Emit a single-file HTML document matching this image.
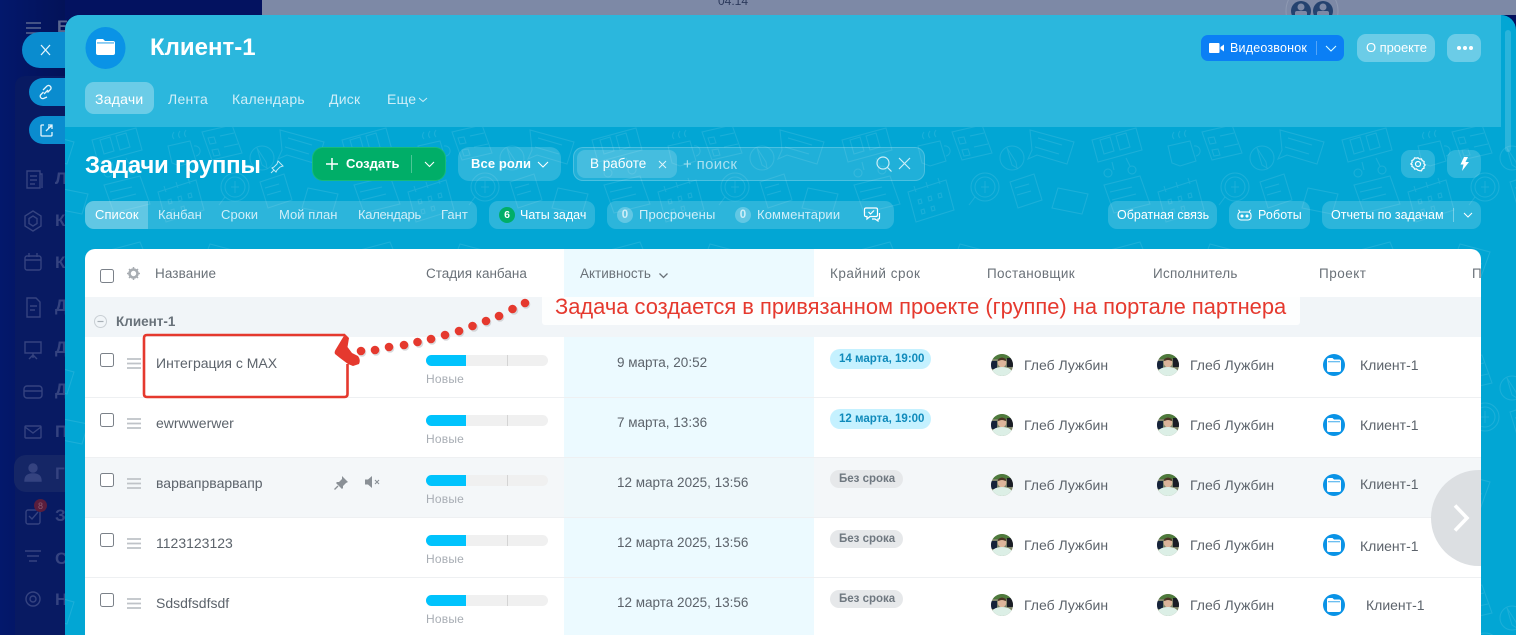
<!DOCTYPE html>
<html lang="ru"><head><meta charset="utf-8"><title>Клиент-1</title>
<style>
html,body{margin:0;padding:0;width:1516px;height:635px;overflow:hidden;background:#03125f;font-family:"Liberation Sans",sans-serif}
div,span{position:absolute;box-sizing:border-box}
.t{white-space:nowrap;line-height:20px;height:20px;font-size:13.5px;letter-spacing:0}
.n{font-size:14px;color:#5c636b}
.d{font-size:13.5px;color:#5c636b}
.s{font-size:12px;color:#a8adb4;letter-spacing:.2px}
.m{font-size:13px;letter-spacing:.05px}
.w{color:#fff}.l{color:#cfeef8}
.h{color:#6a7178;top:264px}
.b{border-radius:9px;background:rgba(255,255,255,.17)}
.c{left:100px;width:14px;height:14px;border:1.3px solid #7b8189;border-radius:2.5px;background:#fff}
.side{left:55px;color:#354380;font-weight:bold;font-size:17px}
svg{position:absolute;overflow:visible}
</style></head><body>
<svg width="0" height="0" style="left:0;top:0"><defs>
<symbol id="folder" viewBox="0 0 22 22"><circle cx="11" cy="11" r="11" fill="#0a93e6"/><path d="M4 6q0-2 2-2h3.500L11 5.500h5q2 0 2 2V16q0 2-2 2H6q-2 0-2-2z" fill="#fff"/><path d="M5 7.800h12" stroke="#0a93e6" stroke-width=".8"/></symbol>
<symbol id="ava" viewBox="0 0 22 22"><clipPath id="cc"><circle cx="11" cy="11" r="11"/></clipPath><g clip-path="url(#cc)"><rect width="22" height="22" fill="#7d8468"/><rect y="0" width="22" height="5" fill="#4e7a3c"/><rect y="7" width="6" height="8" fill="#16233a"/><rect x="16" y="4" width="6" height="9" fill="#1b1e26"/><ellipse cx="11" cy="8.500" rx="4.300" ry="5" fill="#dcb59b"/><path d="M6.500 6q4.500-5 9 0l-1 1q-3.500-2-7 0z" fill="#4a3424"/><path d="M0 22q0-9 11-9t11 9z" fill="#dcefe6"/></g></symbol>
<symbol id="drag" viewBox="0 0 14 11"><path d="M0 1h14M0 5.500h14M0 10h14" stroke="#bfc3c8" stroke-width="1.700"/></symbol>
<symbol id="bar" viewBox="0 0 122 11"><rect width="122" height="11" rx="5.500" fill="#f0f0f0"/><path d="M5.500 0H40v11H5.500a5.500 5.500 0 0 1 0-11z" fill="#00c3fd"/><rect x="81" width="1" height="11" fill="#d4d4d4"/></symbol>
<pattern id="pt" x="90" y="120" width="250" height="230" patternUnits="userSpaceOnUse"><g fill="none" stroke="#fff" stroke-opacity=".1" stroke-width="1">
<path d="M2 20l44-12 6 22-44 12zM10 20l10-3 4 14-10 3zM26 16l10-3 4 14-10 3zM22 42l2 8M36 38l4 8"/><circle cx="18" cy="53" r="4"/><circle cx="42" cy="50" r="4"/>
<path d="M78 26l22-5 6 20-16 5-8-3zM104 26a5 5 0 1 1 2 10M84 12q-3 4 0 7M90 11q-3 4 0 7M96 10q-3 4 0 7"/>
<path d="M112 12l30-7 10 28-30 7zM118 18l6-1 2 6-6 1zM130 16l14-3M122 30l6-1 2 6-6 1zM134 27l14-3"/>
<path d="M14 65l36-9 10 28-36 9zM20 72l22-5M22 80l24-6"/>
<path d="M68 72l38-12 8 30-38 12zM74 66l2 6M86 62l2 6M98 58l2 6M78 80l3-1 1 4-3 1zM88 77l3-1 1 4-3 1zM98 74l3-1 1 4-3 1zM81 90l3-1 1 4-3 1zM91 87l3-1 1 4-3 1z"/>
<circle cx="145" cy="67" r="14"/><circle cx="145" cy="67" r="10"/><path d="M141 67h8M145 61v12M135 77l-6 8"/>
<circle cx="172" cy="38" r="12"/><path d="M167 28l9 14 1 6-5-3z"/>
<path d="M190 10l44 12-7 22-30-9-9 4 4-9zM198 18l24 7M195 27l24 7"/>
<path d="M170 62l24-8 8 26-24 8zM175 68l14-4M177 75l14-4"/><path d="M218 68l30 6-6 20-30-6z"/>
<path d="M20 130l30-8 14 34-22 20-30-6zM30 140l14-4"/><path d="M120 124l30 8-16 44-30-10zM130 140l12 4M126 152l12 4"/>
<circle cx="200" cy="160" r="14"/><path d="M195 158l5-6 5 6h-3v6h-4v-6z"/><path d="M60 200l42-12 8 24-42 14zM70 200l10-3 4 12-10 3z"/>
</g></pattern>
</defs></svg>

<!-- back page -->
<div style="left:262px;top:0;width:1254px;height:15px;background:#7d89a6"></div>
<div class="t" style="left:718px;top:-9px;font-size:12px;color:#2c3a5c">04:14</div>
<svg style="left:0;top:0" width="1516" height="24"><circle cx="1312" cy="11" r="26" fill="none" stroke="#8e99b2"/><circle cx="1301" cy="11" r="10" fill="#24426f"/><circle cx="1323" cy="11" r="10" fill="#24426f"/><g fill="#7d89a6"><circle cx="1301" cy="7" r="3.500"/><circle cx="1323" cy="7" r="3.500"/><rect x="1295" y="11" width="12" height="6" rx="2"/><rect x="1317" y="11" width="12" height="6" rx="2"/></g></svg>
<!-- sidebar -->
<div style="left:0;top:0;width:262px;height:15px;background:#031260"></div>
<div style="left:0;top:0;width:65px;height:635px;background:linear-gradient(90deg,#03186c,#031258)"></div>
<div style="left:15px;top:76px;width:50px;height:559px;border-radius:10px 0 0 0;background:#081a62"></div>
<div style="left:14px;top:455px;width:51px;height:37px;border-radius:12px 0 0 12px;background:#152666"></div>
<svg style="left:0;top:0" width="65" height="635" fill="none" stroke="#354380" stroke-width="1.400">
<path d="M26 23h15M26 28h15M26 33h15" stroke="#5a668f"/>
<path d="M27 171h13v17H27zM30 176h7M30 180h7M30 184h5M40 174h2v14"/>
<path d="M33 211l8 5v10l-8 5-8-5v-10zM33 216l4 2.500v5l-4 2.500-4-2.500v-5z"/>
<rect x="25" y="256" width="16" height="14" rx="2"/><path d="M25 260h16M29 253v4M37 253v4"/>
<path d="M27 298h9l4 4v15H27zM30 306h7M30 310h5"/>
<path d="M25 342h16v11H25zM33 353v5M29 359l4-4 4 4"/>
<rect x="24" y="386" width="18" height="12" rx="3"/><path d="M24 391h18"/>
<rect x="25" y="426" width="16" height="12" rx="1"/><path d="M25 427l8 6 8-6"/>
<circle cx="33" cy="468" r="4" fill="#354380"/><path d="M25 481q0-7 8-7t8 7z" fill="#354380"/>
<rect x="26" y="510" width="14" height="14" rx="2"/><path d="M29 516l3 3 6-7"/>
<path d="M25 551h16M27 556h12M29 561h8"/>
<circle cx="33" cy="599" r="7"/><circle cx="33" cy="599" r="3"/>
</svg>
<div style="left:34px;top:499px;width:13px;height:13px;border-radius:50%;background:#5a1d3c"></div>
<div class="t" style="left:34px;top:496px;width:13px;text-align:center;font-size:9px;color:#8a5a70">8</div>
<div class="t side" style="left:57px;top:17px;color:#5a668f">Б</div>
<div class="t side" style="top:169px">Л</div><div class="t side" style="top:211px">К</div><div class="t side" style="top:253px">К</div><div class="t side" style="top:296px">Д</div><div class="t side" style="top:338px">Д</div><div class="t side" style="top:380px">Д</div><div class="t side" style="top:422px">П</div><div class="t side" style="top:464px">Г</div><div class="t side" style="top:506px">З</div><div class="t side" style="top:549px">С</div><div class="t side" style="top:590px">Н</div>
<!-- side tabs -->
<div style="left:22px;top:32px;width:60px;height:36px;border-radius:18px 0 0 18px;background:#0a8ccf"></div>
<div style="left:29px;top:78px;width:50px;height:28px;border-radius:14px 0 0 14px;background:#0a8ccf"></div>
<div style="left:29px;top:116px;width:50px;height:28px;border-radius:14px 0 0 14px;background:#0a8ccf"></div>
<svg style="left:0;top:0" width="65" height="150" fill="none" stroke="#e4f5fc" stroke-width="1.300">
<path d="M41 45l9 10M50 45l-9 10"/>
<path d="M43 90l4-4a2.500 2.500 0 0 1 3.500 3.500l-3 3M47 97l-3.500 1.500a2.500 2.500 0 0 1-3-3.500l3-3M44 94l4-4"/>
<path d="M50 128v-1h-2M44 125h-2q-1 0-1 1v9q0 1 1 1h9q1 0 1-1v-3M46 131l6-6M48 125h4v4"/>
</svg>

<!-- slider panel -->
<div style="left:65px;top:15px;width:1451px;height:620px;background:#02a6d4;border-radius:15px 15px 0 0;overflow:hidden">
 <svg style="left:0;top:0" width="1451" height="620"><g transform="translate(-65 -15)"><rect x="65" y="15" width="1451" height="620" fill="url(#pt)"/></g></svg>
 <div style="left:0;top:0;width:1436px;height:112px;background:#2bb7dd"></div>
 <div style="left:1440px;top:15px;width:6px;height:122px;background:rgba(255,255,255,.16);border-radius:3px"></div>
</div>

<!-- header -->
<svg style="left:85px;top:27px" width="41" height="42" viewBox="0 0 41 42"><ellipse cx="20.500" cy="21" rx="20" ry="21" fill="#0a93e6"/><path d="M11 14q0-2 2-2h5l2 2h8q2 0 2 2v10q0 2-2 2H13q-2 0-2-2z" fill="#fff"/><rect x="12" y="15.500" width="17" height=".9" fill="#0a93e6"/></svg>
<div class="t w" style="left:150px;top:34px;height:28px;line-height:28px;font-size:24px;font-weight:bold">Клиент-1</div>
<div class="b" style="left:85px;top:82px;width:69px;height:32px;background:rgba(255,255,255,.3)"></div>
<div class="t w" style="left:95px;top:89px;font-size:14px;letter-spacing:.25px">Задачи</div>
<div class="t l" style="left:168px;top:89px;font-size:14px;letter-spacing:.25px">Лента</div>
<div class="t l" style="left:232px;top:89px;font-size:14px;letter-spacing:.25px">Календарь</div>
<div class="t l" style="left:329px;top:89px;font-size:14px;letter-spacing:.25px">Диск</div>
<div class="t l" style="left:387px;top:89px;font-size:14px;letter-spacing:.25px">Еще</div>
<svg style="left:418px;top:97px" width="10" height="6" fill="none" stroke="#cfeef8"><path d="M1 1l4 3.500L9 1"/></svg>

<div style="left:1201px;top:35px;width:143px;height:26px;border-radius:7px;background:#0b7ff5"></div>
<svg style="left:1209px;top:43px" width="16" height="11" fill="#fff"><rect width="10.500" height="10" rx="1"/><path d="M11.500 4l3.500-2.500v7L11.500 6z"/></svg>
<div class="t w" style="left:1230px;top:38px;font-size:12.500px;letter-spacing:.2px">Видеозвонок</div>
<div style="left:1316px;top:41px;width:1px;height:14px;background:rgba(255,255,255,.3)"></div>
<svg style="left:1325px;top:45px" width="12" height="8" fill="none" stroke="#dff" stroke-width="1.100"><path d="M1 1l5 5 5-5"/></svg>
<div class="b" style="left:1357px;top:34px;width:78px;height:28px;background:rgba(255,255,255,.3)"></div>
<div class="t w" style="left:1366px;top:38px;font-size:13px;letter-spacing:-.05px">О проекте</div>
<div class="b" style="left:1447px;top:34px;width:34px;height:28px;background:rgba(255,255,255,.3)"></div>
<svg style="left:1456px;top:45px" width="16" height="6" fill="#fff"><circle cx="3" cy="3" r="2"/><circle cx="9" cy="3" r="2"/><circle cx="15" cy="3" r="2"/></svg>

<!-- toolbar 1 -->
<div class="t w" style="left:85px;top:151px;height:30px;line-height:30px;font-size:24px;font-weight:bold;letter-spacing:-.25px">Задачи группы</div>
<svg style="left:270px;top:160px" width="14" height="14" fill="none" stroke="#bfe8f5"><path d="M8 1l5 5-3 1-3 3-1 2-4-4 2-1 3-3zM4 10l-3 3"/></svg>
<div style="left:312px;top:147px;width:134px;height:34px;border-radius:11px;background:#00ae68;border:1px solid #17bb7b"></div>
<svg style="left:326px;top:158px" width="12" height="12" stroke="#fff" stroke-width="1.500"><path d="M6 0v12M0 6h12"/></svg>
<div class="t w" style="left:346px;top:154px;font-weight:bold;font-size:13px">Создать</div>
<div style="left:411px;top:155px;width:1px;height:18px;background:rgba(255,255,255,.3)"></div>
<svg style="left:424px;top:161px" width="11" height="7" fill="none" stroke="#fff" stroke-width="1.100"><path d="M1 1l4.500 4.500L10 1"/></svg>
<div class="b" style="left:458px;top:147px;width:103px;height:34px;border-radius:11px"></div>
<div class="t w" style="left:471px;top:154px;font-weight:bold;font-size:13px;letter-spacing:.1px">Все роли</div>
<svg style="left:537px;top:161px" width="12" height="7" fill="none" stroke="#fff" stroke-width="1.100"><path d="M1 1l5 5 5-5"/></svg>
<div style="left:573px;top:147px;width:352px;height:34px;border-radius:10px;background:rgba(255,255,255,.12);border:1px solid rgba(255,255,255,.2)"></div>
<div style="left:577px;top:150px;width:100px;height:28px;border-radius:8px;background:rgba(255,255,255,.17)"></div>
<div class="t w" style="left:590px;top:154px;font-size:13.5px">В работе</div>
<svg style="left:658px;top:160px" width="9" height="9" stroke="#e0f5fb"><path d="M1 1l7 7M8 1L1 8"/></svg>
<div class="t" style="left:683px;top:155px;color:#a7e0f0;font-size:15px;letter-spacing:.35px">+ поиск</div>
<svg style="left:876px;top:156px" width="38" height="16" fill="none" stroke="#cdeef7" stroke-width="1.200"><circle cx="7" cy="7" r="6"/><path d="M11.500 11.500L15.500 15.500M23 2l11 11M34 2L23 13"/></svg>
<div class="b" style="left:1401px;top:150px;width:34px;height:28px"></div>
<svg style="left:1411px;top:157px" width="14" height="14" fill="none" stroke="#fff" stroke-width="1.200"><circle cx="7" cy="7" r="2.500"/><path d="M7 .8l1.500 1.300 2-.2.800 1.800 1.800.8-.2 2 1.300 1.500-1.300 1.500.2 1.700-1.800.8-.8 1.800-2-.2L7 13.200l-1.500-1.300-2 .2-.8-1.800-1.800-.8.2-1.700L-.2 7l1.300-1.500-.2-2 1.800-.8.800-1.800 2 .2z"/></svg>
<div class="b" style="left:1447px;top:150px;width:34px;height:28px"></div>
<svg style="left:1459px;top:157px" width="10" height="14" fill="#fff"><path d="M5 0h4L6.500 5H10L3 14l1.500-6.500H1.500z"/></svg>

<!-- toolbar 2 -->
<div class="b" style="left:85px;top:201px;width:392px;height:28px"></div>
<div style="left:85px;top:201px;width:63px;height:28px;border-radius:9px 0 0 9px;background:rgba(255,255,255,.25)"></div>
<div class="t w m" style="left:95px;top:205px">Список</div>
<div class="t l m" style="left:158px;top:205px">Канбан</div>
<div class="t l m" style="left:221px;top:205px">Сроки</div>
<div class="t l m" style="left:279px;top:205px">Мой план</div>
<div class="t l m" style="left:358px;top:205px;letter-spacing:-.3px">Календарь</div>
<div class="t l m" style="left:441px;top:205px">Гант</div>
<div class="b" style="left:489px;top:201px;width:106px;height:28px"></div>
<div style="left:499px;top:207px;width:16px;height:16px;border-radius:50%;background:#00ae68"></div>
<div class="t w" style="left:499px;top:205px;width:16px;text-align:center;font-size:10.5px;font-weight:bold">6</div>
<div class="t w" style="left:520px;top:205px;font-size:12.500px">Чаты задач</div>
<div class="b" style="left:607px;top:201px;width:287px;height:28px"></div>
<div style="left:617px;top:207px;width:16px;height:16px;border-radius:50%;background:rgba(255,255,255,.25)"></div>
<div class="t" style="left:617px;top:205px;width:16px;text-align:center;font-size:11.5px;font-weight:bold;color:#cfeef8">0</div>
<div class="t l" style="left:639px;top:205px;font-size:13px;letter-spacing:.15px">Просрочены</div>
<div style="left:735px;top:207px;width:16px;height:16px;border-radius:50%;background:rgba(255,255,255,.25)"></div>
<div class="t" style="left:735px;top:205px;width:16px;text-align:center;font-size:11.5px;font-weight:bold;color:#cfeef8">0</div>
<div class="t l" style="left:757px;top:205px;font-size:13px;letter-spacing:.12px">Комментарии</div>
<svg style="left:864px;top:207px" width="17" height="16" fill="none" stroke="#fff" stroke-width="1.200"><path d="M2 1h10q1.500 0 1.500 1.500V8q0 1.500-1.500 1.500H6L3 12V9.500H2Q.5 9.500.5 8V2.500Q.5 1 2 1zM4.500 5l2 2 3.500-3.500M15.500 6v5q0 1-1 1H14v2l-3-2H8"/></svg>
<div class="b" style="left:1108px;top:201px;width:109px;height:28px"></div>
<div class="t w" style="left:1117px;top:205px;font-size:12.500px">Обратная связь</div>
<div class="b" style="left:1229px;top:201px;width:81px;height:28px"></div>
<svg style="left:1237px;top:209px" width="15" height="13" fill="none" stroke="#fff" stroke-width="1.100"><rect x="1" y="3" width="13" height="8" rx="3"/><path d="M3 3L1.500 .8M12 3l1.500-2.200"/><circle cx="5" cy="7" r="1" fill="#fff"/><circle cx="10" cy="7" r="1" fill="#fff"/></svg>
<div class="t w" style="left:1258px;top:205px;font-size:12.500px;letter-spacing:.1px">Роботы</div>
<div class="b" style="left:1322px;top:201px;width:159px;height:28px"></div>
<div class="t w" style="left:1331px;top:205px;font-size:12.500px">Отчеты по задачам</div>
<div style="left:1453px;top:208px;width:1px;height:14px;background:rgba(255,255,255,.35)"></div>
<svg style="left:1463px;top:212px" width="10" height="7" fill="none" stroke="#fff"><path d="M1 1l4 4 4-4"/></svg>

<!-- table -->
<div style="left:85px;top:249px;width:1396px;height:386px;background:#fff;border-radius:10px 10px 0 0;overflow:hidden">
 <div style="left:0;top:209px;width:1396px;height:59px;background:#f4f7f9"></div>
 <div style="left:479px;top:0;width:250px;height:386px;background:#ecfaff"></div>
 <div style="left:479px;top:209px;width:250px;height:59px;background:#eef8fb"></div>
 <div style="left:0;top:48px;width:1396px;height:40px;background:#f1f5f8"></div>
 <div style="left:0;top:148px;width:1396px;height:1px;background:#eef0f2"></div>
 <div style="left:0;top:208px;width:1396px;height:1px;background:#eef0f2"></div>
 <div style="left:0;top:268px;width:1396px;height:1px;background:#eef0f2"></div>
 <div style="left:0;top:328px;width:1396px;height:1px;background:#eef0f2"></div>
 <div class="t" style="left:1387px;top:15px;color:#6a7178">П</div>
</div>
<div class="c" style="top:269px"></div>
<svg style="left:127px;top:267px" width="13" height="13"><circle cx="6.500" cy="6.500" r="4" fill="none" stroke="#a8adb2" stroke-width="2.600"/><path d="M6.500 0v13M0 6.500h13M2 2l9 9M11 2l-9 9" stroke="#a8adb2" stroke-width="1.500" stroke-dasharray="2 9 2 0"/></svg>
<div class="t h" style="left:155px;letter-spacing:.1px">Название</div>
<div class="t h" style="left:426px">Стадия канбана</div>
<div class="t h" style="left:580px">Активность</div>
<svg style="left:659px;top:273px" width="9" height="6" fill="none" stroke="#6a7178" stroke-width="1.300"><path d="M.5.5l4 4 4-4"/></svg>
<div class="t h" style="left:830px;letter-spacing:.5px">Крайний срок</div>
<div class="t h" style="left:987px;letter-spacing:.35px">Постановщик</div>
<div class="t h" style="left:1153px;letter-spacing:.25px">Исполнитель</div>
<div class="t h" style="left:1319px;letter-spacing:.5px">Проект</div>
<svg style="left:94px;top:315px" width="13" height="13"><circle cx="6.500" cy="6.500" r="6" fill="#f1f5f8" stroke="#c9cfd4"/><path d="M3.500 6.500h6" stroke="#a8b0b6" stroke-width="1.200"/></svg>
<div class="t" style="left:116px;top:312px;font-weight:bold;color:#687179;font-size:13.5px">Клиент-1</div>

<!-- row 1 -->
<div class="c" style="top:353px"></div><svg style="left:127px;top:358px" width="14" height="11"><use href="#drag"/></svg>
<div class="t n" style="left:156px;top:353px">Интеграция с MAX</div>
<svg style="left:426px;top:355px" width="122" height="11"><use href="#bar"/></svg><div class="t s" style="left:426px;top:369px">Новые</div>
<div class="t d" style="left:617px;top:353px">9 марта, 20:52</div>
<div style="left:830px;top:349px;width:101px;height:20px;border-radius:10px;background:#c5f1ff"></div><div class="t" style="left:839px;top:349px;font-size:11.500px;font-weight:bold;color:#0f8abb">14 марта, 19:00</div>
<svg style="left:991px;top:354px" width="22" height="22"><use href="#ava"/></svg><div class="t n" style="left:1024px;top:355px">Глеб Лужбин</div>
<svg style="left:1157px;top:354px" width="22" height="22"><use href="#ava"/></svg><div class="t n" style="left:1190px;top:355px">Глеб Лужбин</div>
<svg style="left:1323px;top:354px" width="22" height="22"><use href="#folder"/></svg><div class="t n" style="left:1360px;top:355px">Клиент-1</div>
<!-- row 2 -->
<div class="c" style="top:413px"></div><svg style="left:127px;top:418px" width="14" height="11"><use href="#drag"/></svg>
<div class="t n" style="left:156px;top:413px">ewrwwerwer</div>
<svg style="left:426px;top:415px" width="122" height="11"><use href="#bar"/></svg><div class="t s" style="left:426px;top:429px">Новые</div>
<div class="t d" style="left:617px;top:413px">7 марта, 13:36</div>
<div style="left:830px;top:409px;width:101px;height:20px;border-radius:10px;background:#c5f1ff"></div><div class="t" style="left:839px;top:409px;font-size:11.500px;font-weight:bold;color:#0f8abb">12 марта, 19:00</div>
<svg style="left:991px;top:414px" width="22" height="22"><use href="#ava"/></svg><div class="t n" style="left:1024px;top:415px">Глеб Лужбин</div>
<svg style="left:1157px;top:414px" width="22" height="22"><use href="#ava"/></svg><div class="t n" style="left:1190px;top:415px">Глеб Лужбин</div>
<svg style="left:1323px;top:414px" width="22" height="22"><use href="#folder"/></svg><div class="t n" style="left:1360px;top:415px">Клиент-1</div>
<!-- row 3 -->
<div class="c" style="top:473px"></div><svg style="left:127px;top:478px" width="14" height="11"><use href="#drag"/></svg>
<div class="t n" style="left:156px;top:473px">варвапрварвапр</div>
<svg style="left:334px;top:476px" width="14" height="14" fill="#8a9096"><path d="M8 0l6 6-2 1-3 3 0 2-1 1-6-6 1-1 2 0 3-3z"/><path d="M4 10l-3.500 3.500" stroke="#8a9096" stroke-width="1.300"/></svg>
<svg style="left:365px;top:476px" width="16" height="12"><path d="M0 3.500h3L7 0v12L3 8.500H0z" fill="#8a9096"/><path d="M10 4l4 4M14 4l-4 4" stroke="#8a9096" stroke-width="1.100"/></svg>
<svg style="left:426px;top:475px" width="122" height="11"><use href="#bar"/></svg><div class="t s" style="left:426px;top:489px">Новые</div>
<div class="t d" style="left:617px;top:473px">12 марта 2025, 13:56</div>
<div style="left:830px;top:470px;width:73px;height:18px;border-radius:9px;background:#e6e8ea"></div><div class="t" style="left:839px;top:469px;font-size:11.500px;font-weight:bold;color:#6f7880">Без срока</div>
<svg style="left:991px;top:474px" width="22" height="22"><use href="#ava"/></svg><div class="t n" style="left:1024px;top:475px">Глеб Лужбин</div>
<svg style="left:1157px;top:474px" width="22" height="22"><use href="#ava"/></svg><div class="t n" style="left:1190px;top:475px">Глеб Лужбин</div>
<svg style="left:1323px;top:474px" width="22" height="22"><use href="#folder"/></svg><div class="t n" style="left:1360px;top:474px">Клиент-1</div>
<!-- row 4 -->
<div class="c" style="top:533px"></div><svg style="left:127px;top:538px" width="14" height="11"><use href="#drag"/></svg>
<div class="t n" style="left:156px;top:533px">1123123123</div>
<svg style="left:426px;top:535px" width="122" height="11"><use href="#bar"/></svg><div class="t s" style="left:426px;top:549px">Новые</div>
<div class="t d" style="left:617px;top:533px">12 марта 2025, 13:56</div>
<div style="left:830px;top:530px;width:73px;height:18px;border-radius:9px;background:#e6e8ea"></div><div class="t" style="left:839px;top:529px;font-size:11.500px;font-weight:bold;color:#6f7880">Без срока</div>
<svg style="left:991px;top:534px" width="22" height="22"><use href="#ava"/></svg><div class="t n" style="left:1024px;top:535px">Глеб Лужбин</div>
<svg style="left:1157px;top:534px" width="22" height="22"><use href="#ava"/></svg><div class="t n" style="left:1190px;top:535px">Глеб Лужбин</div>
<svg style="left:1323px;top:534px" width="22" height="22"><use href="#folder"/></svg><div class="t n" style="left:1360px;top:536px">Клиент-1</div>
<!-- row 5 -->
<div class="c" style="top:593px"></div><svg style="left:127px;top:598px" width="14" height="11"><use href="#drag"/></svg>
<div class="t n" style="left:156px;top:593px">Sdsdfsdfsdf</div>
<svg style="left:426px;top:595px" width="122" height="11"><use href="#bar"/></svg><div class="t s" style="left:426px;top:609px">Новые</div>
<div class="t d" style="left:617px;top:593px">12 марта 2025, 13:56</div>
<div style="left:830px;top:590px;width:73px;height:18px;border-radius:9px;background:#e6e8ea"></div><div class="t" style="left:839px;top:589px;font-size:11.500px;font-weight:bold;color:#6f7880">Без срока</div>
<svg style="left:991px;top:594px" width="22" height="22"><use href="#ava"/></svg><div class="t n" style="left:1024px;top:595px">Глеб Лужбин</div>
<svg style="left:1157px;top:594px" width="22" height="22"><use href="#ava"/></svg><div class="t n" style="left:1190px;top:595px">Глеб Лужбин</div>
<svg style="left:1323px;top:594px" width="22" height="22"><use href="#folder"/></svg><div class="t n" style="left:1366px;top:595px">Клиент-1</div>

<!-- scroll arrow -->
<div style="left:1431px;top:470px;width:50px;height:96px;overflow:hidden"><div style="left:0;top:0;width:96px;height:96px;border-radius:50%;background:#dcdfe2"></div></div>
<svg style="left:1453px;top:504px" width="18" height="28" fill="none" stroke="#fff" stroke-width="3.600"><path d="M2 1.500l12 12.500L2 26.500"/></svg>

<!-- annotation -->
<div style="left:542px;top:297px;width:758px;height:28px;background:#fdfefe;border-radius:0 0 3px 3px"></div>
<div class="t" style="left:555px;top:296px;height:22px;line-height:22px;font-size:21.900px;color:#e5392e">Задача создается в привязанном проекте (группе) на портале партнера</div>
<svg style="left:0;top:0" width="1516" height="635">
<path d="M347.500 364V394q0 3-3 3H147q-3 0-3-3V338q0-3 3-3H345" fill="none" stroke="#e5392e" stroke-width="2.600"/>
<g fill="#b9bcc0" fill-opacity=".55"><circle cx="362" cy="352.500" r="4.300"/><circle cx="376" cy="351.500" r="4.300"/><circle cx="390" cy="348.500" r="4.300"/><circle cx="405" cy="346.500" r="4.300"/><circle cx="419" cy="343.500" r="4.300"/><circle cx="432" cy="340.500" r="4.300"/><circle cx="446" cy="336.500" r="4.300"/><circle cx="460" cy="332.500" r="4.300"/><circle cx="474" cy="327.500" r="4.300"/><circle cx="487" cy="322.500" r="4.300"/><circle cx="500" cy="317.500" r="4.300"/><circle cx="514" cy="310.500" r="4.300"/><circle cx="526" cy="304.500" r="4.300"/></g>
<g fill="#e5392e"><circle cx="361" cy="351" r="4.300"/><circle cx="375" cy="350" r="4.300"/><circle cx="389" cy="347" r="4.300"/><circle cx="404" cy="345" r="4.300"/><circle cx="417.500" cy="342" r="4.300"/><circle cx="431" cy="339" r="4.300"/><circle cx="445" cy="335" r="4.300"/><circle cx="459" cy="331" r="4.300"/><circle cx="472.500" cy="326" r="4.300"/><circle cx="486" cy="321" r="4.300"/><circle cx="499" cy="316" r="4.300"/><circle cx="512.500" cy="309" r="4.300"/><circle cx="525" cy="303" r="4.300"/>
<path d="M345 334L349 338L347.500 347L352 353L358 356Q361 360 359 364L353 366L348 364L340 358L335 354Q334 352 336 349L342 339Z"/></g>
</svg>
</body></html>
